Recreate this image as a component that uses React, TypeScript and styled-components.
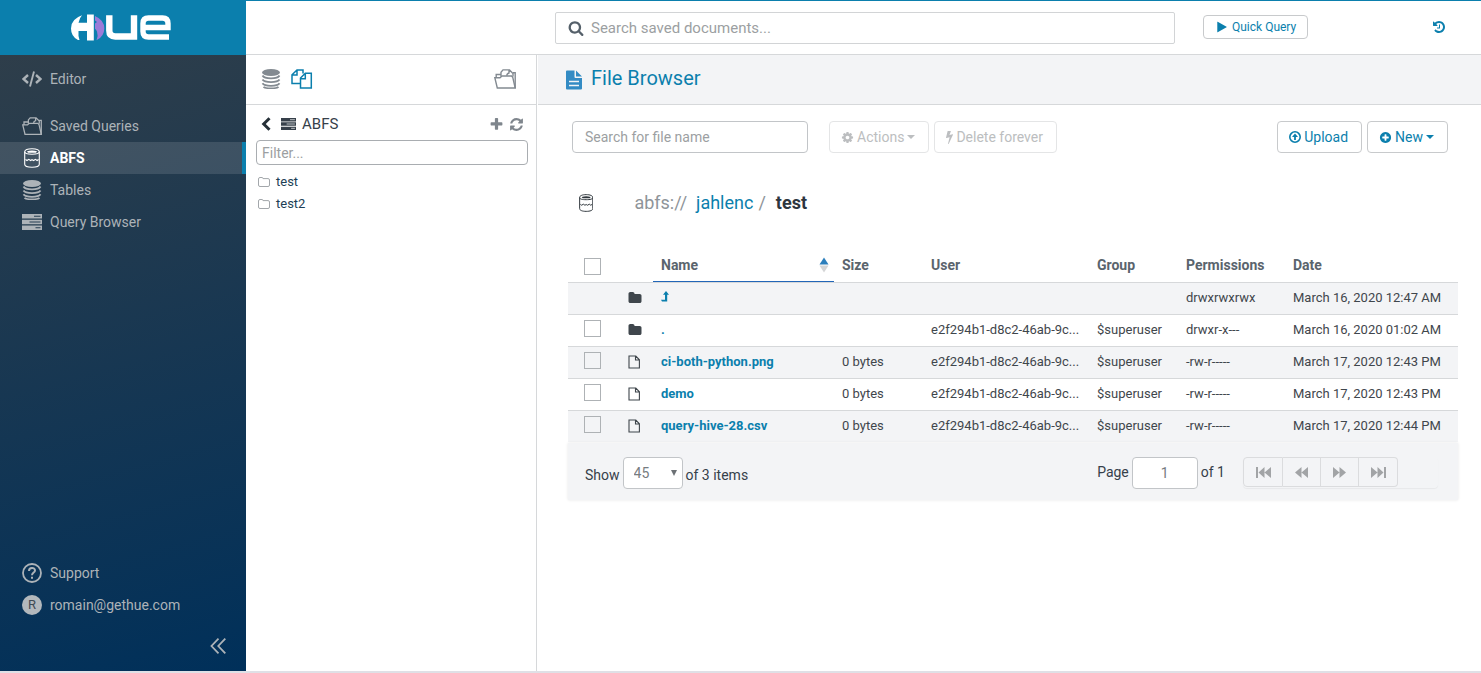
import React from "react";
import styled, { createGlobalStyle, css } from "styled-components";

const blue = "#0b7fad";
const line = "#d6d8da";
const panel = "#f3f4f6";
const ink = "#36404a";

const GlobalStyle = createGlobalStyle`
  *, *::before, *::after { box-sizing: border-box; }
  body {
    margin: 0;
    background: #fff;
    color: ${ink};
    font: 14px/20px Roboto, "Liberation Sans", sans-serif;
  }
  a { color: inherit; text-decoration: none; }
  svg { display: block; flex: none; }
  button, input, select { font: inherit; color: inherit; margin: 0; }
  button { cursor: pointer; }
`;

/* ---------- icons ---------- */

const glyphs = {
  play: "M1576 927l-1328 738q-23 13-39.5 3t-16.5-36v-1472q0-26 16.5-36t39.5 3l1328 738q23 13 23 31t-23 31z",
  search:
    "M1216 832q0-185-131.5-316.5t-316.5-131.5-316.5 131.5-131.5 316.5 131.5 316.5 316.5 131.5 316.5-131.5 131.5-316.5zm512 832q0 52-38 90t-90 38q-54 0-90-38l-343-342q-179 124-399 124-143 0-273.5-55.5t-225-150-150-225-55.5-273.5 55.5-273.5 150-225 225-150 273.5-55.5 273.5 55.5 225 150 150 225 55.5 273.5q0 220-124 399l343 343q37 37 37 90z",
  plus: "M1600 736v192q0 40-28 68t-68 28h-416v416q0 40-28 68t-68 28h-192q-40 0-68-28t-28-68v-416h-416q-40 0-68-28t-28-68v-192q0-40 28-68t68-28h416v-416q0-40 28-68t68-28h192q40 0 68 28t28 68v416h416q40 0 68 28t28 68z",
  refresh:
    "M1639 1056q0 5-1 7-64 268-268 434.5t-478 166.5q-146 0-282.5-55t-243.5-157l-129 129q-19 19-45 19t-45-19-19-45v-448q0-26 19-45t45-19h448q26 0 45 19t19 45-19 45l-137 137q71 66 161 102t187 36q134 0 250-65t186-179q11-17 53-117 8-23 30-23h192q13 0 22.5 9.5t9.5 22.5zm25-800v448q0 26-19 45t-45 19h-448q-26 0-45-19t-19-45 19-45l138-138q-148-137-349-137-134 0-250 65t-186 179q-11 17-53 117-8 23-30 23h-199q-13 0-22.5-9.5t-9.5-22.5v-7q65-268 270-434.5t480-166.5q146 0 284 55.5t245 156.5l130-129q19-19 45-19t45 19 19 45z",
  cog: "M1152 896q0-106-75-181t-181-75-181 75-75 181 75 181 181 75 181-75 75-181zm512-109v222q0 12-8 23t-20 13l-185 28q-19 54-39 91 35 50 107 138 10 12 10 25t-9 23q-27 37-99 108t-94 71q-12 0-26-9l-138-108q-44 23-91 38-16 136-29 186-7 28-36 28h-222q-14 0-24.5-8.5t-11.5-21.5l-28-184q-49-16-90-37l-141 107q-10 9-25 9-14 0-25-11-126-114-165-168-7-10-7-23 0-12 8-23 15-21 51-66.5t54-70.5q-27-50-41-99l-183-27q-13-2-21-12.5t-8-23.5v-222q0-12 8-23t19-13l186-28q14-46 39-92-40-57-107-138-10-12-10-24 0-10 9-23 26-36 98.5-107.5t94.5-71.5q13 0 26 10l138 107q44-23 91-38 16-136 29-186 7-28 36-28h222q14 0 24.5 8.5t11.5 21.5l28 184q49 16 90 37l142-107q9-9 24-9 13 0 25 10 129 119 165 170 7 8 7 22 0 12-8 23-15 21-51 66.5t-54 70.5q26 50 41 98l183 28q13 2 21 12.5t8 23.5z",
  plusCircle:
    "M1344 960v-128q0-26-19-45t-45-19h-256v-256q0-26-19-45t-45-19h-128q-26 0-45 19t-19 45v256h-256q-26 0-45 19t-19 45v128q0 26 19 45t45 19h256v256q0 26 19 45t45 19h128q26 0 45-19t19-45v-256h256q26 0 45-19t19-45zm320-64q0 209-103 385.5t-279.5 279.5-385.5 103-385.5-103-279.5-279.5-103-385.5 103-385.5 279.5-279.5 385.5-103 385.5 103 279.5 279.5 103 385.5z",
  history:
    "M1664 896q0 156-61 298t-164 245-245 164-298 61q-172 0-327-72.5t-264-204.5q-7-10-6.5-22.5t8.5-20.5l137-138q10-9 25-9 16 2 23 12 73 95 179 147t225 52q104 0 198.5-40.5t163.5-109.5 109.5-163.5 40.5-198.5-40.5-198.5-109.5-163.5-163.5-109.5-198.5-40.5q-98 0-188 35.5t-160 101.5l137 138q31 30 14 69-17 40-59 40h-448q-26 0-45-19t-19-45v-448q0-42 40-59 39-17 69 14l130 129q107-101 244.5-156.5t284.5-55.5q156 0 298 61t245 164 164 245 61 298zm-640-288v448q0 14-9 23t-23 9h-320q-14 0-23-9t-9-23v-64q0-14 9-23t23-9h224v-352q0-14 9-23t23-9h64q14 0 23 9t9 23z",
  folder:
    "M1728 608v704q0 92-66 158t-158 66h-1216q-92 0-158-66t-66-158v-960q0-92 66-158t158-66h320q92 0 158 66t66 158v32h672q92 0 158 66t66 158z",
};

const Glyph = ({ name, size = 14 }: { name: keyof typeof glyphs; size?: number }) => (
  <svg width={size} height={size} viewBox="0 0 1792 1792" fill="currentColor" aria-hidden="true">
    <path d={glyphs[name]} />
  </svg>
);

const BoltIcon = () => (
  <svg width="7" height="14" viewBox="448 0 896 1792" fill="currentColor" aria-hidden="true">
    <path d="M1333 566q18 20 7 44l-540 1157q-13 25-42 25-4 0-14-2-17-5-25.5-19t-4.5-30l197-808-406 101q-4 1-12 1-18 0-31-11-18-15-13-39l201-825q4-14 16-23t28-9h328q19 0 32 12.5t13 29.5q0 8-5 18l-171 463 396-98q8-2 12-2 19 0 34 15z" />
  </svg>
);

const CodeIcon = () => (
  <svg width="20" height="18" viewBox="0 0 20 18" fill="none" stroke="currentColor" strokeWidth="2.400" aria-hidden="true">
    <path d="M6 5L1.500 9 6 13M14 5l4.500 4L14 13" />
    <path d="M12 1.500L8 16.500" strokeWidth="1.900" />
  </svg>
);

const DocumentsIcon = ({ size = 20 }: { size?: number }) => (
  <svg width={size} height={(size * 20) / 22} viewBox="0 0 22 20" fill="none" stroke="currentColor" strokeWidth="1.4" aria-hidden="true">
    <path d="M.8 8.700H6L8 7h9.500l1.200 1.200L21.200 19H3.300z" />
    <path d="M2.200 8.700V5.500H7M7 7.500V3.200L9 .9h6.500L19 4.500V7.500M15 1.200V4Q12.800 4.500 12.800 6.700M19 3.800h2.200V19" />
  </svg>
);

const CylinderIcon = ({ size = 20 }: { size?: number }) => (
  <svg width={(size * 16) / 20} height={size} viewBox="0 0 16 20" fill="none" stroke="currentColor" strokeWidth="1.100" aria-hidden="true">
    <path d="M.7 3.800C.7 2 3.500.7 8 .7s7.300 1.300 7.300 3.100v12.500c0 1.800-2.800 3-7.300 3s-7.300-1.200-7.300-3z" />
    <path d="M.7 3.800C.7 5.800 3.500 6.300 8 6.300s7.300-.5 7.300-2.500" />
    <path d="M3 3.200Q8 1.800 13 3.200L12 4.800H4z" fill="currentColor" stroke="none" />
    <path d="M1.500 11.500l1.500 1 1.800-1.200 1.800 1.200L8 11.700l1.600.8 1.800-1.200 1.700 1.200 1.500-1" />
  </svg>
);

const DatabaseIcon = () => (
  <svg width="20" height="20" viewBox="0 0 20 20" aria-hidden="true">
    <ellipse cx="10" cy="3.500" rx="9" ry="3.500" fill="currentColor" />
    <path
      d="M1.500 6.500Q3 9.300 10 9.300t8.500-2.800M1.500 10.500Q3 13.100 10 13.100t8.500-2.600M1.500 14.300Q3 16.800 10 16.800t8.500-2.500M2.500 17.800Q4 19.300 10 19.300t7.500-1.500"
      fill="none"
      stroke="currentColor"
      strokeWidth="1.800"
    />
  </svg>
);

const ServersIcon = ({ width = 20, stripe = "#263f52" }: { width?: number; stripe?: string }) => (
  <svg width={width} height={(width * 16) / 20} viewBox="0 0 20 16" aria-hidden="true">
    <path d="M0 0h20v4.500H0zM0 5.750h20v4.500H0zM0 11.500h20V16H0z" fill="currentColor" />
    <path d="M12 2.250h6.500M7.500 8h11M13.500 13.750h5" stroke={stripe} strokeWidth="1.200" />
  </svg>
);

const HelpIcon = () => (
  <svg width="20" height="20" viewBox="0 0 20 20" fill="none" stroke="currentColor" strokeWidth="2" aria-hidden="true">
    <circle cx="10" cy="10" r="9" strokeWidth="1.800" />
    <path d="M7 8c0-4 6-4 6-.6C13 9.600 10 9.600 10 12.300M10 13.800v2" />
  </svg>
);

const CollapseIcon = () => (
  <svg width="16" height="16" viewBox="0 0 16 16" fill="none" stroke="#adb3b8" strokeWidth="1.800" aria-hidden="true">
    <path d="M8.500.7L1.500 8l7 7.300M15.300.7L8.300 8l7 7.300" />
  </svg>
);

const CopyIcon = () => (
  <svg width="22" height="20" viewBox="0 0 22 20" fill="none" stroke="currentColor" strokeWidth="1.500" aria-hidden="true">
    <path d="M9.500 14.500H1V5.800L6 1h6v3.500M6 1v5H1M9.500 19V9l4.800-4.800h6V19zM14.300 4.500v5.200H9.500" />
  </svg>
);

const ChevronIcon = () => (
  <svg width="10" height="14" viewBox="0 0 10 14" fill="none" stroke="currentColor" strokeWidth="3" aria-hidden="true">
    <path d="M8.500 1.200L2.700 7l5.800 5.800" />
  </svg>
);

const FolderOutlineIcon = () => (
  <svg width="12" height="10" viewBox="0 0 12 10" fill="none" stroke="#a3a7ab" aria-hidden="true">
    <path d="M.5 8V2Q.5.500 2 .500h2Q5 .500 5 1.600h5Q11.500 1.600 11.500 3v5Q11.500 9.500 10 9.500H2Q.5 9.500.500 8z" />
  </svg>
);

const FileOutlineIcon = () => (
  <svg width="12" height="14" viewBox="0 0 12 14" fill="none" stroke="currentColor" strokeWidth="1.100" aria-hidden="true">
    <path d="M1 1h6.800l3.600 3.800V13H1zM7.500 1v4h4" />
  </svg>
);

const FileSolidIcon = () => (
  <svg width="16" height="20" viewBox="0 0 16 20" aria-hidden="true">
    <path d="M0 1.500V18.500Q0 19.500 1 19.500h14q1 0 1-1V8H9.500Q8.500 8 8.500 7V.500H1Q0 .500 0 1.500zM10 .500V6.500h6z" fill="#338bc4" />
    <path d="M3 11.500h10M3 15.500h10" stroke={panel} strokeWidth="1.300" />
  </svg>
);

const UploadIcon = () => (
  <svg width="12" height="12" viewBox="0 0 12 12" fill="none" stroke="currentColor" strokeWidth="1.600" aria-hidden="true">
    <circle cx="6" cy="6" r="5.200" />
    <path d="M6 9V5" strokeWidth="1.800" />
    <path d="M6 2.600L9 6H3z" fill="currentColor" stroke="none" />
  </svg>
);

const LevelUpIcon = () => (
  <svg width="8" height="12" viewBox="0 0 8 12" aria-hidden="true">
    <path d="M5 1L8 4.800H6.200V11.500H1L0 9.700h4V4.800H2z" fill="currentColor" />
  </svg>
);

const SortIcon = () => (
  <svg width="10" height="16" viewBox="0 0 10 16" aria-hidden="true">
    <path d="M5 .5l4.500 7h-9z" fill="#2c7fbc" />
    <path d="M5 15.500L.5 8.500h9z" fill="#d4d5d6" />
  </svg>
);

const seekPaths = {
  first: "M0 1h2v11H0zM8.500 1v11L2.500 6.500zM15 1v11L8.500 6.500z",
  previous: "M7.500 1v11L1 6.500zM14 1v11L7.500 6.500z",
  next: "M1 1v11l6.500-5.500zM7.500 1v11L14 6.500z",
  last: "M0 1v11l6.500-5.500zM6.500 1v11l6-5.500zM13 1h2v11h-2z",
};

const SeekIcon = ({ kind }: { kind: keyof typeof seekPaths }) => (
  <svg width="15" height="13" viewBox="0 0 15 13" fill="currentColor" aria-hidden="true">
    <path d={seekPaths[kind]} />
  </svg>
);

const HueLogo = () => (
  <svg width="102" height="28" viewBox="0 0 102 28" role="img" aria-label="Hue">
    <path d="M11 1.300Q0 5 0 14.500 0 22.500 7 26h1.500Q7 21.500 7.500 17H16v9.500h6.800V.5H16v8.200H7.500Q8.500 4 11 1.300z" fill="#fff" />
    <path d="M24 2Q33.300 6 33.300 14.500 33.300 22.500 25.500 26.300q2-4.300.5-8.800-1-2.200-2-2.700V9.500l2-1.500-2-1.500z" fill="#9b7bd8" />
    <g fill="none" stroke="#fff">
      <path d="M38.300 1.300v15.200q0 6 6 6h18.700V1.300M59.500 22.500q3.500 0 3.500-4" strokeWidth="6.400" />
      <path d="M98 23H77.500q-5.500 0-5.500-5.500v-8q0-5.500 5.500-5.500h14q5.500 0 5.500 5.500v4H73" strokeWidth="5.400" />
    </g>
  </svg>
);

/* ---------- frame ---------- */

const Page = styled.div`
  display: grid;
  grid-template-columns: 246px minmax(0, 1fr);
  min-height: 100vh;
  border-bottom: 2px solid #dfe0e6;
`;

const Sidebar = styled.aside`
  display: flex;
  flex-direction: column;
  color: #adb3b8;
  background: linear-gradient(165deg, #323f49, #00305a);
`;

const Brand = styled.a`
  display: flex;
  justify-content: center;
  align-items: center;
  height: 55px;
  padding-right: 2px;
  background: ${blue};
`;

const NavGroup = styled.nav<{ $bottom?: boolean }>`
  padding-top: ${(p) => (p.$bottom ? 0 : 8)}px;
  margin-top: ${(p) => (p.$bottom ? "auto" : "0")};
`;

const NavItem = styled.a<{ $active?: boolean; $spaced?: boolean }>`
  display: grid;
  grid-template-columns: 20px 1fr;
  justify-items: center;
  align-items: center;
  column-gap: 8px;
  height: 32px;
  padding-left: 22px;
  margin-bottom: ${(p) => (p.$spaced ? 15 : 0)}px;
  border-right: 4px solid transparent;
  ${(p) =>
    p.$active &&
    css`
      color: #fff;
      font-weight: 700;
      background: rgba(255, 255, 255, 0.12) padding-box;
      border-right-color: ${blue};
    `}
`;

const NavLabel = styled.span`
  justify-self: start;
`;

const Avatar = styled.span`
  width: 20px;
  height: 20px;
  border-radius: 50%;
  background: #b3b8bc;
  color: #3f4a54;
  font-size: 13px;
  text-align: center;
`;

const IconButton = styled.button`
  display: inline-flex;
  padding: 0;
  border: 0;
  background: none;
`;

const CollapseBar = styled.div`
  display: flex;
  justify-content: flex-end;
  align-items: center;
  height: 50px;
  padding-right: 20px;
`;

const Workspace = styled.div`
  display: grid;
  grid-template-rows: 55px 1fr;
`;

const TopBar = styled.header`
  display: grid;
  grid-template-columns: 1fr minmax(0, 620px) 306px;
  align-items: center;
  border-top: 1px solid ${blue};
  border-bottom: 1px solid ${line};
`;

const SearchBox = styled.label`
  grid-column: 2;
  display: flex;
  align-items: center;
  gap: 7px;
  height: 32px;
  padding: 0 12px;
  border: 1px solid #d2d4d6;
  border-radius: 2px;
  color: #55606a;
`;

const SearchInput = styled.input`
  flex: 1;
  min-width: 0;
  padding: 0;
  border: 0;
  outline: 0;
  background: none;
  font-size: 15px;
  &::placeholder { color: #9c9fa2; opacity: 1; }
`;

const TopActions = styled.div`
  display: flex;
  justify-content: space-between;
  align-items: center;
  padding: 0 35px 2px 28px;
  color: ${blue};
`;

const Button = styled.button<{ $small?: boolean }>`
  display: inline-flex;
  align-items: center;
  gap: ${(p) => (p.$small ? 4 : 3)}px;
  height: ${(p) => (p.$small ? 24 : 32)}px;
  padding: ${(p) => (p.$small ? "0 11px 0 12px" : "0 13px 0 11px")};
  border: 1px solid #c8cacc;
  border-radius: 4px;
  background: #fff;
  color: ${blue};
  font-size: ${(p) => (p.$small ? 12 : 14)}px;
  white-space: nowrap;
  &:disabled {
    color: #bcbec0;
    border-color: #e4e5e6;
    cursor: default;
  }
`;

const Caret = styled.span`
  border: 4px solid transparent;
  border-top-color: currentColor;
  border-bottom: 0;
`;

const Body = styled.div`
  display: grid;
  grid-template-columns: 291px minmax(0, 1fr);
  column-gap: 1px;
`;

/* ---------- assist panel ---------- */

const Assist = styled.section`
  border-right: 1px solid ${line};
`;

const AssistTabs = styled.div`
  display: flex;
  align-items: center;
  gap: 10px;
  height: 50px;
  padding: 0 20px 2px 15px;
  border-bottom: 1px solid ${line};
`;

const TabButton = styled(IconButton)<{ $active?: boolean; $end?: boolean }>`
  color: ${(p) => (p.$active ? blue : "#838a91")};
  margin-left: ${(p) => (p.$end ? "auto" : "0")};
`;

const AssistContent = styled.div`
  padding: 9px 8px 0 10px;
`;

const AssistHeading = styled.div`
  display: flex;
  align-items: center;
  gap: 5px;
  height: 22px;
  margin-bottom: 4px;
  padding: 0 4px 2px 5px;
  color: #7f868d;
`;

const AssistTitle = styled.h2`
  display: flex;
  align-items: center;
  gap: 6px;
  flex: 1;
  margin: 0 0 0 5px;
  color: ${ink};
  font-size: 15px;
  font-weight: 400;
`;

const BackButton = styled(IconButton)`
  color: #263038;
`;

const FilterInput = styled.input`
  display: block;
  width: 100%;
  height: 25px;
  padding: 0 5px;
  border: 1px solid #a9adb1;
  border-radius: 4px;
  &::placeholder { color: #9c9fa2; opacity: 1; }
`;

const FolderList = styled.ul`
  margin: 6px 0 0;
  padding: 0 2px;
  list-style: none;
  font-size: 13px;
  line-height: 22px;
  color: #1d3f56;
`;

const FolderLink = styled.a`
  display: flex;
  align-items: center;
  gap: 6px;
`;

/* ---------- file browser ---------- */

const TitleBar = styled.div`
  display: flex;
  align-items: center;
  gap: 9px;
  height: 50px;
  padding: 0 28px;
  border-bottom: 1px solid ${line};
  background: ${panel};
`;

const Title = styled.h1`
  margin: 0;
  padding-bottom: 4px;
  color: ${blue};
  font-size: 20px;
  line-height: 24px;
  font-weight: 400;
`;

const Content = styled.div`
  padding: 16px 23px 0 30px;
`;

const Toolbar = styled.div`
  display: flex;
  gap: 5px;
  padding: 0 10px 0 4px;
`;

const FileSearch = styled.input`
  width: 236px;
  height: 32px;
  margin-right: 16px;
  padding: 0 12px;
  border: 1px solid #c2c5c8;
  border-radius: 4px;
  &::placeholder { color: #9c9fa2; opacity: 1; }
`;

const Spacer = styled.div`
  flex: 1;
`;

const Breadcrumb = styled.nav`
  display: flex;
  align-items: center;
  height: 100px;
  padding-left: 11px;
  color: #8e9499;
  font-size: 18px;
`;

const Scheme = styled.span`
  margin: 0 9px 0 41px;
`;

const CrumbLink = styled.a`
  margin-right: 5px;
  color: ${blue};
`;

const CurrentCrumb = styled.strong`
  margin-left: 10px;
  color: #2d363e;
`;

const Dark = styled.span`
  color: #30373d;
`;

const FileTable = styled.table`
  width: 100%;
  table-layout: fixed;
  border-collapse: collapse;
  font-size: 13px;
  color: #3f464c;
`;

const Col = styled.col<{ $w?: number }>`
  width: ${(p) => (p.$w ? `${p.$w}px` : "auto")};
`;

const HeadCell = styled.th<{ $sorted?: boolean }>`
  height: 29px;
  padding: 0 8px 4px;
  color: #5a646d;
  font-size: 14px;
  font-weight: 700;
  line-height: 20px;
  text-align: left;
  box-shadow: ${(p) => (p.$sorted ? "inset 0 -1px #2266b8" : "none")};
`;

const SortHead = styled.span`
  display: flex;
  justify-content: space-between;
  align-items: center;
  margin-right: -3px;
`;

const FileRow = styled.tr`
  height: 32px;
  border-top: 1px solid ${line};
  &:nth-child(odd) { background: ${panel}; }
`;

const Cell = styled.td`
  padding: 0 8px;
  white-space: nowrap;
`;

const CheckCell = styled(Cell)`
  padding: 0 16px 4px;
`;

const CheckHead = styled(HeadCell)`
  padding: 0 16px 2px;
`;

const Checkbox = styled.input.attrs({ type: "checkbox" })`
  display: block;
  appearance: none;
  width: 17px;
  height: 17px;
  border: 1px solid #aeb2b5;
  background: transparent;
`;

const NameLink = styled.a`
  display: inline-block;
  color: ${blue};
  font-weight: 700;
`;

const Footer = styled.div`
  display: flex;
  align-items: flex-start;
  height: 57px;
  margin-top: 1px;
  padding: 14px 20px 0 17px;
  background: ${panel};
  box-shadow: 0 0 3px rgba(0, 0, 0, 0.1);
`;

const FooterLabel = styled.label<{ $low?: boolean }>`
  display: flex;
  align-items: flex-start;
  gap: 3px;
  height: 32px;
  line-height: ${(p) => (p.$low ? 36 : 30)}px;
`;

const SizeSelect = styled.select`
  width: 60px;
  height: 32px;
  padding: 0 6px 0 10px;
  border: 1px solid #c2c5c8;
  border-radius: 4px;
  color: #777c80;
  background: #fff;
  appearance: none;
`;

const SelectWrap = styled.span`
  position: relative;
  display: inline-block;
  height: 32px;
  line-height: 20px;
  &::after {
    content: "";
    position: absolute;
    right: 6px;
    top: 13px;
    border: 3px solid transparent;
    border-top: 6px solid #6c7175;
    border-bottom: 0;
    pointer-events: none;
  }
`;

const PageInput = styled.input`
  width: 66px;
  height: 32px;
  border: 1px solid #c2c5c8;
  border-radius: 4px;
  background: #fff;
  color: #777c80;
  text-align: center;
`;

const Pager = styled.div`
  display: flex;
  width: 195px;
  height: 31px;
  margin-left: 18px;
  border-radius: 4px;
  box-shadow: 0 1px 1px rgba(0, 0, 0, 0.05);
`;

const PagerButton = styled.button`
  display: flex;
  justify-content: center;
  align-items: center;
  width: 40px;
  height: 30px;
  padding: 0;
  border: 1px solid #dbdcde;
  background: ${panel};
  color: #a2a4a6;
  & + & { width: 38px; border-left: 0; }
  &:first-child { border-radius: 4px 0 0 4px; }
  &:last-child { width: 39px; border-radius: 0 4px 4px 0; }
`;

interface FileEntry {
  name: React.ReactNode;
  kind: "folder" | "file";
  size?: string;
  user?: string;
  group?: string;
  permissions: string;
  date: string;
  parent?: boolean;
}

const owner = { user: "e2f294b1-d8c2-46ab-9c...", group: "$superuser" };

const files: FileEntry[] = [
  { name: <LevelUpIcon />, kind: "folder", permissions: "drwxrwxrwx", date: "March 16, 2020 12:47 AM", parent: true },
  { name: ".", kind: "folder", ...owner, permissions: "drwxr-x---", date: "March 16, 2020 01:02 AM" },
  { name: "ci-both-python.png", kind: "file", size: "0 bytes", ...owner, permissions: "-rw-r-----", date: "March 17, 2020 12:43 PM" },
  { name: "demo", kind: "file", size: "0 bytes", ...owner, permissions: "-rw-r-----", date: "March 17, 2020 12:43 PM" },
  { name: "query-hive-28.csv", kind: "file", size: "0 bytes", ...owner, permissions: "-rw-r-----", date: "March 17, 2020 12:44 PM" },
];

const seeks: (keyof typeof seekPaths)[] = ["first", "previous", "next", "last"];

export default function App() {
  return (
    <Page>
      <GlobalStyle />
      <Sidebar>
        <Brand href="#home"><HueLogo /></Brand>
        <NavGroup aria-label="Main">
          <NavItem href="#editor" $spaced><CodeIcon /><NavLabel>Editor</NavLabel></NavItem>
          <NavItem href="#saved"><DocumentsIcon /><NavLabel>Saved Queries</NavLabel></NavItem>
          <NavItem href="#abfs" $active><CylinderIcon /><NavLabel>ABFS</NavLabel></NavItem>
          <NavItem href="#tables"><DatabaseIcon /><NavLabel>Tables</NavLabel></NavItem>
          <NavItem href="#queries"><ServersIcon /><NavLabel>Query Browser</NavLabel></NavItem>
        </NavGroup>
        <NavGroup $bottom aria-label="Account">
          <NavItem href="#support"><HelpIcon /><NavLabel>Support</NavLabel></NavItem>
          <NavItem href="#account"><Avatar>R</Avatar><NavLabel>romain@gethue.com</NavLabel></NavItem>
        </NavGroup>
        <CollapseBar>
          <IconButton aria-label="Collapse sidebar"><CollapseIcon /></IconButton>
        </CollapseBar>
      </Sidebar>

      <Workspace>
        <TopBar>
          <SearchBox>
            <Glyph name="search" size={16} />
            <SearchInput type="text" aria-label="Search saved documents" placeholder="Search saved documents..." />
          </SearchBox>
          <TopActions>
            <Button $small><Glyph name="play" size={12} />Quick Query</Button>
            <TabButton $active aria-label="History"><Glyph name="history" size={14} /></TabButton>
          </TopActions>
        </TopBar>

        <Body>
          <Assist>
            <AssistTabs>
              <TabButton aria-label="Databases"><DatabaseIcon /></TabButton>
              <TabButton $active aria-label="Files"><CopyIcon /></TabButton>
              <TabButton $end aria-label="Documents"><DocumentsIcon size={22} /></TabButton>
            </AssistTabs>
            <AssistContent>
              <AssistHeading>
                <BackButton aria-label="Back"><ChevronIcon /></BackButton>
                <AssistTitle><ServersIcon width={15} stripe="#c9cdd0" />ABFS</AssistTitle>
                <IconButton aria-label="Add"><Glyph name="plus" size={15} /></IconButton>
                <IconButton aria-label="Refresh"><Glyph name="refresh" size={15} /></IconButton>
              </AssistHeading>
              <FilterInput type="text" aria-label="Filter" placeholder="Filter..." />
              <FolderList>
                {["test", "test2"].map((name) => (
                  <li key={name}>
                    <FolderLink href={`#${name}`}><FolderOutlineIcon />{name}</FolderLink>
                  </li>
                ))}
              </FolderList>
            </AssistContent>
          </Assist>

          <main>
            <TitleBar><FileSolidIcon /><Title>File Browser</Title></TitleBar>
            <Content>
              <Toolbar>
                <FileSearch type="text" aria-label="Search for file name" placeholder="Search for file name" />
                <Button disabled><Glyph name="cog" size={13} />Actions<Caret /></Button>
                <Button disabled><BoltIcon />Delete forever</Button>
                <Spacer />
                <Button><UploadIcon />Upload</Button>
                <Button><Glyph name="plusCircle" size={13} />New<Caret /></Button>
              </Toolbar>
              <Breadcrumb aria-label="Path">
                <Dark><CylinderIcon size={18} /></Dark>
                <Scheme>abfs://</Scheme>
                <CrumbLink href="#jahlenc">jahlenc</CrumbLink>
                <span>/</span>
                <CurrentCrumb>test</CurrentCrumb>
              </Breadcrumb>
              <FileTable>
                <colgroup>
                  <Col $w={52} /><Col $w={33} /><Col /><Col $w={89} />
                  <Col $w={166} /><Col $w={89} /><Col $w={107} /><Col $w={173} />
                </colgroup>
                <thead>
                  <tr>
                    <CheckHead><Checkbox aria-label="Select all" /></CheckHead>
                    <HeadCell />
                    <HeadCell $sorted><SortHead>Name<SortIcon /></SortHead></HeadCell>
                    <HeadCell>Size</HeadCell>
                    <HeadCell>User</HeadCell>
                    <HeadCell>Group</HeadCell>
                    <HeadCell>Permissions</HeadCell>
                    <HeadCell>Date</HeadCell>
                  </tr>
                </thead>
                <tbody>
                  {files.map((file, i) => (
                    <FileRow key={i}>
                      <CheckCell>{!file.parent && <Checkbox aria-label={`Select row ${i}`} />}</CheckCell>
                      <Cell>{file.kind === "folder" ? <Glyph name="folder" /> : <FileOutlineIcon />}</Cell>
                      <Cell><NameLink href="#file" aria-label={file.parent ? "Up" : undefined}>{file.name}</NameLink></Cell>
                      <Cell>{file.size}</Cell>
                      <Cell>{file.user}</Cell>
                      <Cell>{file.group}</Cell>
                      <Cell>{file.permissions}</Cell>
                      <Cell>{file.date}</Cell>
                    </FileRow>
                  ))}
                </tbody>
              </FileTable>
              <Footer>
                <FooterLabel $low>
                  Show
                  <SelectWrap>
                    <SizeSelect defaultValue="45"><option>45</option></SizeSelect>
                  </SelectWrap>
                  of 3 items
                </FooterLabel>
                <Spacer />
                <FooterLabel>
                  Page
                  <PageInput type="text" defaultValue="1" />
                  of 1
                </FooterLabel>
                <Pager>
                  {seeks.map((kind) => (
                    <PagerButton key={kind} aria-label={`${kind} page`}><SeekIcon kind={kind} /></PagerButton>
                  ))}
                </Pager>
              </Footer>
            </Content>
          </main>
        </Body>
      </Workspace>
    </Page>
  );
}
